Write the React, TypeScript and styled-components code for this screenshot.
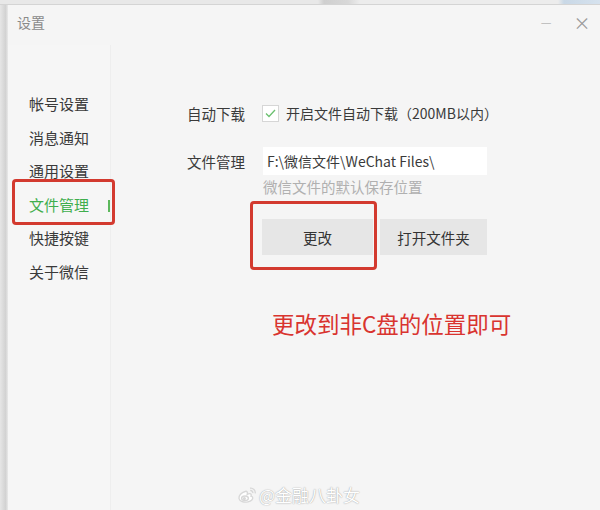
import React from 'react';
import styled, { createGlobalStyle } from 'styled-components';

const GlobalStyle = createGlobalStyle`
  html, body {
    margin: 0;
    padding: 0;
    background: #e4e4e4;
    font-family: "Noto Sans CJK SC", "Noto Sans", sans-serif;
  }
`;

const Frame = styled.div`
  position: relative;
  width: 600px;
  height: 510px;
  display: flex;
  flex-direction: column;
  overflow: hidden;
`;

const TopStrip = styled.div`
  height: 4px;
  background: linear-gradient(90deg, #e8e8e8 0%, #e8e8e8 53%, #cfcfcf 54%, #d8d8d8 58%, #ececec 60%, #ececec 93%, #c9d8e6 94%, #d6e2ee 100%);
  border-bottom: 1px solid #d4d4d4;
`;

const Row = styled.div`
  flex: 1;
  display: flex;
`;

const LeftStrip = styled.div`
  width: 8px;
  background: linear-gradient(90deg, #e6e6e6, #d2d2d2 70%, #e9e9e9);
`;

const Window = styled.div`
  flex: 1;
  display: flex;
  flex-direction: column;
  background: #f5f5f5;
`;

const TitleBar = styled.div`
  height: 40px;
  display: flex;
  align-items: center;
  padding: 0 0 6px 9px;
  box-sizing: border-box;
`;

const Title = styled.div`
  flex: 1;
  font-size: 14px;
  color: #8a8a8a;
`;

const WinButton = styled.div<{ $light?: boolean }>`
  width: 36px;
  text-align: center;
  font-size: ${({ $light }) => ($light ? '12px' : '17px')};
  color: ${({ $light }) => ($light ? '#b5b5b5' : '#9a9a9a')};
  line-height: 1;
`;

const Body = styled.div`
  flex: 1;
  display: flex;
`;

const Sidebar = styled.nav`
  width: 102px;
  padding-top: 42px;
  border-right: 1px solid #eeeeee;
  background: #f6f6f6;
  display: flex;
  flex-direction: column;
`;

const NavItem = styled.div<{ $active?: boolean }>`
  position: relative;
  height: 33.5px;
  display: flex;
  align-items: center;
  padding-left: 21px;
  font-size: 15px;
  color: ${({ $active }) => ($active ? '#3fae4d' : '#3a3a3a')};
`;

const ActiveBar = styled.span`
  position: absolute;
  right: 0;
  top: 12px;
  width: 2px;
  height: 12px;
  background: #5cb85c;
`;

const Main = styled.main`
  flex: 1;
  padding: 54px 0 0 76px;
  display: flex;
  flex-direction: column;
`;

const FieldRow = styled.div`
  display: flex;
  align-items: center;
  height: 28px;
`;

const Label = styled.div`
  width: 75px;
  font-size: 14.5px;
  color: #3a3a3a;
`;

const Checkbox = styled.span`
  width: 15px;
  height: 15px;
  border: 1px solid #d6d6d6;
  background: #fff;
  display: flex;
  align-items: center;
  justify-content: center;
  margin-right: 7px;
`;

const CheckText = styled.span`
  font-size: 14px;
  color: #3a3a3a;
`;

const PathInput = styled.div`
  width: 224px;
  height: 28px;
  margin-left: 1px;
  box-sizing: border-box;
  padding-left: 4px;
  background: #fff;
  display: flex;
  align-items: center;
  font-size: 14px;
  color: #3a3a3a;
`;

const Hint = styled.div`
  margin: 2px 0 0 76px;
  font-size: 14.5px;
  line-height: 20px;
  color: #b0b0b0;
`;

const ButtonRow = styled.div`
  display: flex;
  gap: 7px;
  margin: 22px 0 0 75px;
`;

const Button = styled.div<{ $w: number }>`
  position: relative;
  width: ${({ $w }) => $w}px;
  height: 36px;
  background: #e6e6e6;
  display: flex;
  align-items: center;
  justify-content: center;
  font-size: 14.5px;
  color: #333;
`;

const Mark = styled.div<{ $t: number; $r: number; $b: number; $l: number }>`
  position: absolute;
  top: ${({ $t }) => $t}px;
  right: ${({ $r }) => $r}px;
  bottom: ${({ $b }) => $b}px;
  left: ${({ $l }) => $l}px;
  border: 3px solid #d33a2f;
  border-radius: 4px;
  pointer-events: none;
`;

const Note = styled.div`
  margin: 56px 0 0 85px;
  font-size: 22.5px;
  line-height: 24px;
  color: #d9342f;
`;

const Watermark = styled.div`
  position: absolute;
  left: 237px;
  top: 482px;
  display: flex;
  align-items: center;
  gap: 2px;
  font-size: 17px;
  color: #fff;
  text-shadow: 0 0 1px rgba(0, 0, 0, 0.35), 0 0 2px rgba(0, 0, 0, 0.15);
`;

const WeiboLogo = () => (
  <svg width="20" height="18" viewBox="0 0 20 18" fill="none" stroke="#d8d8d8" strokeWidth="1.4">
    <path d="M8 5.5C4.5 6.5 1.5 9.5 2 12.5c.5 3 5 4.2 9 3.4 3.4-.7 5.3-2.8 4.6-4.6-.4-1-1.6-1.2-1.6-1.2s.8-1.6-.4-2.2c-1.3-.6-3.3.4-3.3.4s.5-1.6-.3-2.6C9.4 5 8.6 5.3 8 5.5z" fill="#fff" />
    <ellipse cx="8" cy="12.3" rx="3.4" ry="2.3" />
    <circle cx="7.4" cy="12.6" r="0.9" fill="#d8d8d8" />
    <path d="M13 2.2a4.5 4.5 0 0 1 5.2 5.2" />
    <path d="M13.2 4.6a2.2 2.2 0 0 1 2.6 2.6" />
  </svg>
);

export default function App() {
  return (
    <>
      <GlobalStyle />
      <Frame>
        <TopStrip />
        <Row>
          <LeftStrip />
          <Window>
            <TitleBar>
              <Title>设置</Title>
              <WinButton $light>—</WinButton>
              <WinButton>×</WinButton>
            </TitleBar>
            <Body>
              <Sidebar>
                <NavItem>帐号设置</NavItem>
                <NavItem>消息通知</NavItem>
                <NavItem>通用设置</NavItem>
                <NavItem $active>
                  文件管理
                  <ActiveBar />
                  <Mark $t={-9} $r={-5} $b={-4} $l={4} />
                </NavItem>
                <NavItem>快捷按键</NavItem>
                <NavItem>关于微信</NavItem>
              </Sidebar>
              <Main>
                <FieldRow>
                  <Label>自动下载</Label>
                  <Checkbox>
                    <svg width="11" height="9" viewBox="0 0 11 9" fill="none">
                      <path d="M1 4.5l3 3L10 1" stroke="#6cc070" strokeWidth="1.3" />
                    </svg>
                  </Checkbox>
                  <CheckText>开启文件自动下载（200MB以内）</CheckText>
                </FieldRow>
                <FieldRow style={{ marginTop: 20 }}>
                  <Label>文件管理</Label>
                  <PathInput>F:\微信文件\WeChat Files\</PathInput>
                </FieldRow>
                <Hint>微信文件的默认保存位置</Hint>
                <ButtonRow>
                  <Button $w={111}>
                    更改
                    <Mark $t={-18} $r={-4} $b={-15} $l={-12} />
                  </Button>
                  <Button $w={107}>打开文件夹</Button>
                </ButtonRow>
                <Note>更改到非C盘的位置即可</Note>
              </Main>
            </Body>
          </Window>
        </Row>
        <Watermark>
          <WeiboLogo />
          @金融八卦女
        </Watermark>
      </Frame>
    </>
  );
}
